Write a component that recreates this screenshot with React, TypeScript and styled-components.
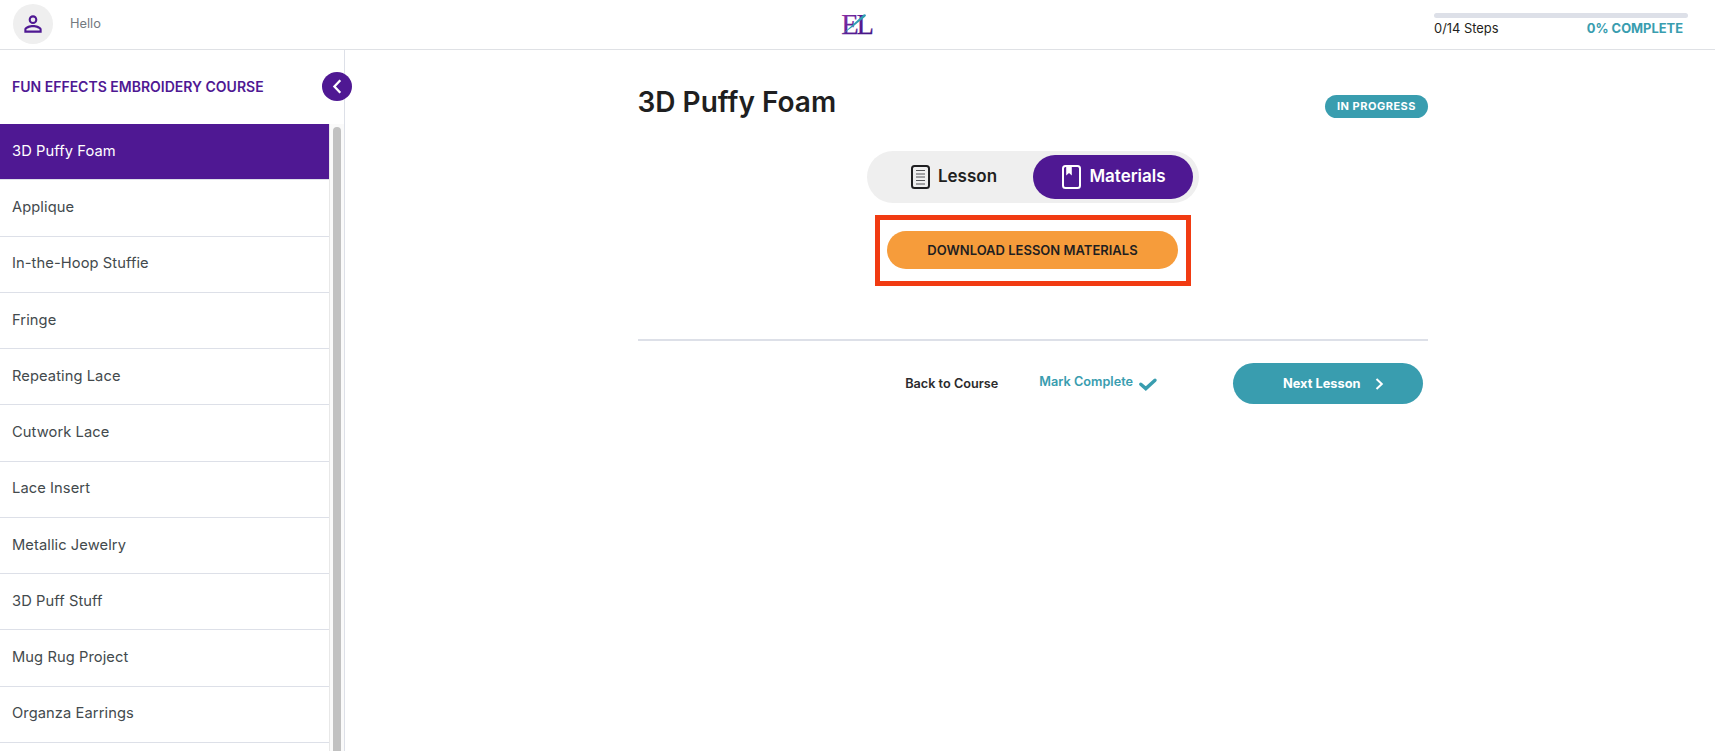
import styled, { createGlobalStyle } from "styled-components";

const Colors = {
  purple: "#4f1893",
  teal: "#399daf",
  orange: "#f69c3b",
  red: "#f13b12",
  line: "#dde0e8",
  grey: "#efefef",
  dark: "#1f1f21",
};

const GlobalStyle = createGlobalStyle`
  * {
    box-sizing: border-box;
  }

  body {
    margin: 0;
    background: #ffffff;
    color: ${Colors.dark};
    font-family: Inter, "Liberation Sans", sans-serif;
    overflow: hidden;
  }

  button {
    border: none;
    padding: 0;
    font-family: inherit;
    cursor: pointer;
  }

  svg {
    display: block;
    flex-shrink: 0;
    overflow: visible;
  }
`;

const Page = styled.div`
  height: 100vh;
  display: flex;
  flex-direction: column;
`;

const Header = styled.header`
  height: 50px;
  flex-shrink: 0;
  display: grid;
  grid-template-columns: 1fr 36px 1fr;
  border-bottom: 1px solid #dfe1e5;
`;

const User = styled.div`
  display: flex;
  align-items: center;
  height: 48px;
  padding-left: 13px;
  gap: 17px;
`;

const UserName = styled.span`
  padding-bottom: 2px;
  font-size: 12.8px;
  color: #73797f;
`;

const Avatar = styled.div`
  width: 40px;
  height: 40px;
  border-radius: 50%;
  background: ${Colors.grey};
  display: grid;
  place-items: center;
`;

const Logo = styled.div`
  padding-top: 8px;
`;

const Progress = styled.div`
  width: 254px;
  margin: 13px 27px 0 auto;
`;

const ProgressTrack = styled.div`
  height: 5px;
  border-radius: 3px;
  background: ${Colors.line};
`;

const ProgressText = styled.div`
  display: flex;
  justify-content: space-between;
  padding: 3px 5px 0 0;
  font-size: 12.9px;
  line-height: 15px;
`;

const Percent = styled.span`
  font-weight: 700;
  color: ${Colors.teal};
`;

const Body = styled.div`
  flex: 1;
  min-height: 0;
  display: flex;
`;

const Sidebar = styled.aside`
  position: relative;
  width: 345px;
  flex-shrink: 0;
  border-right: 1px solid ${Colors.line};
  display: flex;
  flex-direction: column;
`;

const CourseTitle = styled.div`
  height: 74px;
  flex-shrink: 0;
  display: flex;
  align-items: center;
  padding: 0 0 2px 12px;
  font-size: 14px;
  font-weight: 600;
  color: ${Colors.purple};
`;

const Collapse = styled.button`
  position: absolute;
  top: 22px;
  right: -8px;
  width: 30px;
  height: 29px;
  border-radius: 50%;
  background: ${Colors.purple};
  display: grid;
  place-items: center;
`;

const ListArea = styled.div`
  flex: 1;
  min-height: 0;
  display: flex;
`;

const LessonList = styled.div`
  width: 329px;
  overflow: hidden;
`;

const LessonRow = styled.div<{ $active: boolean }>`
  height: 56.25px;
  display: flex;
  align-items: center;
  padding: 0 12px 1.5px;
  border-bottom: 1px solid ${Colors.line};
  background: ${(props) => (props.$active ? Colors.purple : "transparent")};
  background-clip: padding-box;
  color: ${(props) => (props.$active ? "#ffffff" : "#434a4d")};
  font-size: 14.7px;
  letter-spacing: 0.08px;
  cursor: pointer;
`;

const ScrollTrack = styled.div`
  flex: 1;
  padding: 3px 3px 0;
  border-left: 1px solid #e8e8e8;
  background: #fafafa;
`;

const ScrollThumb = styled.div`
  width: 8px;
  height: 100%;
  border-radius: 4px 4px 0 0;
  background: #c1c1c1;
`;

const Main = styled.main`
  flex: 1;
  display: flex;
  flex-direction: column;
  align-items: center;
  padding-left: 6px;
`;

const Content = styled.div`
  width: 790px;
  display: flex;
  flex-direction: column;
  align-items: center;
`;

const TitleRow = styled.div`
  width: 100%;
  height: 101px;
  display: flex;
  justify-content: space-between;
  align-items: flex-start;
`;

const Title = styled.h1`
  margin: 35px 0 0 -0.5px;
  font-size: 28px;
  line-height: 34px;
  font-weight: 600;
`;

const Badge = styled.span`
  width: 103px;
  height: 23px;
  margin-top: 45px;
  padding-bottom: 2px;
  border-radius: 12px;
  display: grid;
  place-items: center;
  background: ${Colors.teal};
  color: #ffffff;
  font-size: 11px;
  font-weight: 700;
  letter-spacing: 0.5px;
`;

const Tabs = styled.div`
  display: flex;
  padding: 4px 6px;
  border-radius: 26px;
  background: ${Colors.grey};
`;

const Tab = styled.button<{ $active?: boolean }>`
  width: 160px;
  height: 44px;
  border-radius: 22px;
  padding-left: 2px;
  display: flex;
  align-items: center;
  justify-content: center;
  gap: 8px;
  background: ${(props) => (props.$active ? Colors.purple : "transparent")};
  color: ${(props) => (props.$active ? "#ffffff" : Colors.dark)};
  font-size: 17px;
  font-weight: 600;
`;

const TabLabel = styled.span`
  padding-bottom: 2px;
`;

const Highlight = styled.div`
  width: 316px;
  height: 71px;
  margin-top: 12px;
  padding: 11px 7px;
  border: 5px solid ${Colors.red};
`;

const Download = styled.button`
  width: 291px;
  height: 38px;
  border-radius: 19px;
  background: ${Colors.orange};
  color: ${Colors.dark};
  font-size: 13px;
  font-weight: 600;
`;

const Divider = styled.div`
  width: 100%;
  height: 2px;
  margin-top: 53px;
  background: ${Colors.line};
`;

const LessonNav = styled.div`
  width: 100%;
  height: 41px;
  margin-top: 22px;
  padding-right: 5px;
  display: flex;
  align-items: center;
  justify-content: flex-end;
  font-size: 12.7px;
  font-weight: 600;
`;

const BackLink = styled.a`
  margin-right: 41px;
  color: #2b2b2d;
`;

const MarkComplete = styled.a`
  display: flex;
  align-items: center;
  gap: 6px;
  margin-right: 76px;
  padding-bottom: 4px;
  color: ${Colors.teal};

  svg {
    margin-top: 6px;
  }
`;

const NextButton = styled.button`
  width: 190px;
  height: 41px;
  border-radius: 21px;
  padding-left: 50px;
  display: flex;
  align-items: center;
  gap: 15px;
  background: ${Colors.teal};
  color: #ffffff;
  font-size: 12.8px;
  font-weight: 700;
`;

const PersonIcon = () => (
  <svg width="26" height="26" viewBox="0 0 24 24" fill={Colors.purple}>
    <path d="M12 5.9a2.1 2.1 0 1 1 0 4.2 2.1 2.1 0 0 1 0-4.2m0 9c2.97 0 6.1 1.46 6.1 2.1v1.1H5.9V17c0-.64 3.13-2.1 6.1-2.1M12 4C9.79 4 8 5.79 8 8s1.79 4 4 4 4-1.79 4-4-1.79-4-4-4m0 9c-2.67 0-8 1.34-8 4v3h16v-3c0-2.66-5.33-4-8-4" />
  </svg>
);

const LogoMark = () => (
  <svg width="36" height="34" viewBox="0 0 36 34">
    <defs>
      <linearGradient id="letters" x1="0" y1="0" x2="1" y2="0.6">
        <stop offset="0" stopColor="#9a35a8" />
        <stop offset="0.5" stopColor="#5a1d95" />
        <stop offset="1" stopColor="#451585" />
      </linearGradient>
    </defs>
    <text
      y="26"
      fontFamily="'Liberation Serif', serif"
      fontSize="28.5"
      fill="url(#letters)"
      stroke="url(#letters)"
      strokeWidth="0.25"
    >
      <tspan x="1.2">E</tspan>
      <tspan x="16.6">L</tspan>
    </text>
    <path d="M2.6 26 L23.6 6.6 Q26.6 5.6 25.4 8.4 L14.4 17.6 Z" fill="#2f9fb3" />
  </svg>
);

const LessonIcon = () => (
  <svg width="19" height="24" viewBox="0 0 19 24" fill="none">
    <rect
      x="1"
      y="1"
      width="17"
      height="22"
      rx="2.5"
      stroke="#1f1f21"
      strokeWidth="2"
    />
    <path
      d="M5 5.5h9M5 9h9M5 12h9M5 15.5h9M5 19h9"
      stroke="#555558"
      strokeWidth="1"
    />
  </svg>
);

const MaterialsIcon = () => (
  <svg width="19" height="24" viewBox="0 0 19 24" fill="none">
    <rect
      x="1"
      y="1"
      width="17"
      height="22"
      rx="2.5"
      stroke="#ffffff"
      strokeWidth="2"
    />
    <path d="M4.2 1.5h5.6v9L7 8l-2.8 2.5z" fill="#ffffff" />
  </svg>
);

const lessons = [
  "3D Puffy Foam",
  "Applique",
  "In-the-Hoop Stuffie",
  "Fringe",
  "Repeating Lace",
  "Cutwork Lace",
  "Lace Insert",
  "Metallic Jewelry",
  "3D Puff Stuff",
  "Mug Rug Project",
  "Organza Earrings",
];

function TopBar() {
  return (
    <Header>
      <User>
        <Avatar>
          <PersonIcon />
        </Avatar>
        <UserName>Hello</UserName>
      </User>
      <Logo>
        <LogoMark />
      </Logo>
      <Progress>
        <ProgressTrack />
        <ProgressText>
          <span>0/14 Steps</span>
          <Percent>0% COMPLETE</Percent>
        </ProgressText>
      </Progress>
    </Header>
  );
}

function CourseSidebar({ current }: { current: string }) {
  return (
    <Sidebar>
      <CourseTitle>FUN EFFECTS EMBROIDERY COURSE</CourseTitle>
      <Collapse aria-label="Collapse">
        <svg width="10" height="15" viewBox="0 0 10 15" fill="none">
          <path d="M8.3 1.3 2.4 7.5l5.9 6.2" stroke="#ffffff" strokeWidth="2.3" />
        </svg>
      </Collapse>
      <ListArea>
        <LessonList>
          {lessons.map((name) => (
            <LessonRow key={name} $active={name === current}>
              {name}
            </LessonRow>
          ))}
        </LessonList>
        <ScrollTrack>
          <ScrollThumb />
        </ScrollTrack>
      </ListArea>
    </Sidebar>
  );
}

export default function App() {
  return (
    <>
      <GlobalStyle />
      <Page>
        <TopBar />
        <Body>
          <CourseSidebar current="3D Puffy Foam" />
          <Main>
            <Content>
              <TitleRow>
                <Title>3D Puffy Foam</Title>
                <Badge>IN PROGRESS</Badge>
              </TitleRow>
              <Tabs>
                <Tab>
                  <LessonIcon />
                  <TabLabel>Lesson</TabLabel>
                </Tab>
                <Tab $active>
                  <MaterialsIcon />
                  <TabLabel>Materials</TabLabel>
                </Tab>
              </Tabs>
              <Highlight>
                <Download>DOWNLOAD LESSON MATERIALS</Download>
              </Highlight>
              <Divider />
              <LessonNav>
                <BackLink>Back to Course</BackLink>
                <MarkComplete>
                  Mark Complete
                  <svg width="18" height="13" viewBox="0 0 18 13" fill="none">
                    <path
                      d="M1.8 6.2 6.8 10.6 16 2.2"
                      stroke={Colors.teal}
                      strokeWidth="3.4"
                      strokeLinecap="round"
                    />
                  </svg>
                </MarkComplete>
                <NextButton>
                  Next Lesson
                  <svg width="9" height="12" viewBox="0 0 9 12" fill="none">
                    <path d="M1.5 1 6.8 6l-5.3 5" stroke="#ffffff" strokeWidth="2" />
                  </svg>
                </NextButton>
              </LessonNav>
            </Content>
          </Main>
        </Body>
      </Page>
    </>
  );
}
